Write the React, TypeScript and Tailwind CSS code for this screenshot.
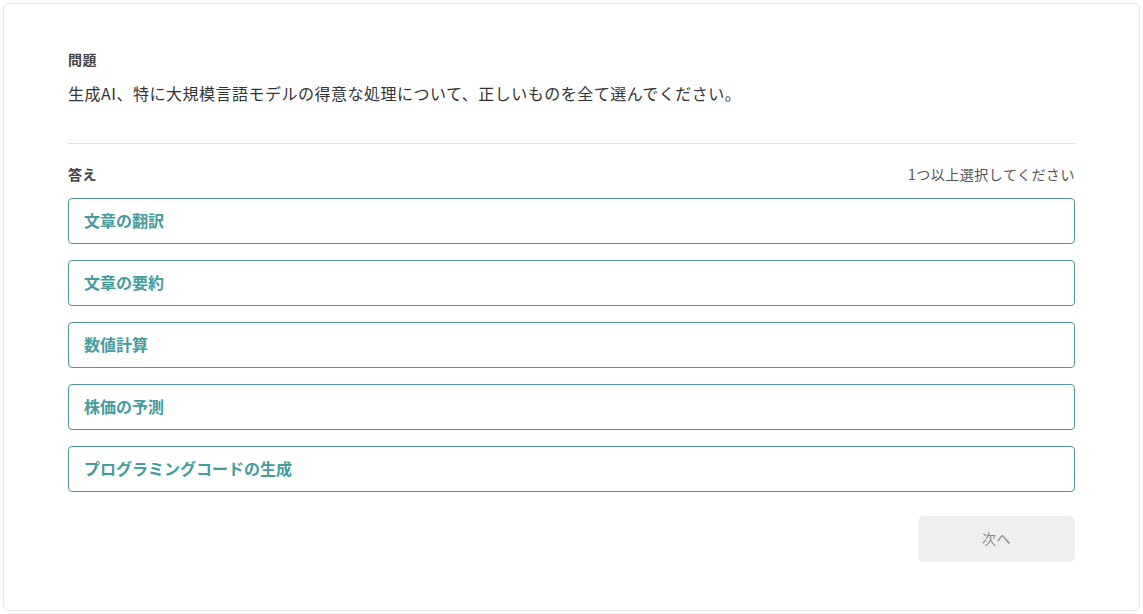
export default function App() {
  const options = [
    '文章の翻訳',
    '文章の要約',
    '数値計算',
    '株価の予測',
    'プログラミングコードの生成',
  ];

  return (
    <div
      className="min-h-screen bg-white p-[3px]"
      style={{ fontFamily: '"Noto Sans CJK JP", "Noto Sans", sans-serif' }}
    >
      <div className="w-[1137px] h-[608px] rounded-md border border-[#e6e6e6] bg-white px-16 pt-[45px] shadow-[0_0_2px_rgba(0,0,0,0.04)]">
        {/* 問題 */}
        <div className="border-b border-[#e0e0e0] pb-[36px]">
          <div className="text-sm leading-5 font-bold tracking-[0.03em] text-[#444]">問題</div>
          <p className="mt-[10px] text-base leading-7 tracking-[0.5px] text-[#333]">
            生成AI、特に大規模言語モデルの得意な処理について、正しいものを全て選んでください。
          </p>
        </div>

        {/* 答え */}
        <div className="mt-[20px] flex items-center justify-between">
          <div className="text-sm leading-5 font-bold tracking-[0.03em] text-[#444]">答え</div>
          <div className="text-sm leading-5 tracking-[0.5px] text-[#555]">1つ以上選択してください</div>
        </div>

        <div className="mt-[14px] flex flex-col gap-4">
          {options.map((opt) => (
            <button
              key={opt}
              className="h-[46px] w-full rounded border border-[#50979a] px-[15px] pb-[2px] text-left text-base font-bold text-[#449c9e]"
            >
              {opt}
            </button>
          ))}
        </div>

        <div className="mt-6 flex justify-end">
          <button className="h-[46px] w-[157px] rounded-md bg-[#efefef] pb-[2px] text-sm tracking-[0.5px] text-[#888]">
            次へ
          </button>
        </div>
      </div>
    </div>
  );
}
